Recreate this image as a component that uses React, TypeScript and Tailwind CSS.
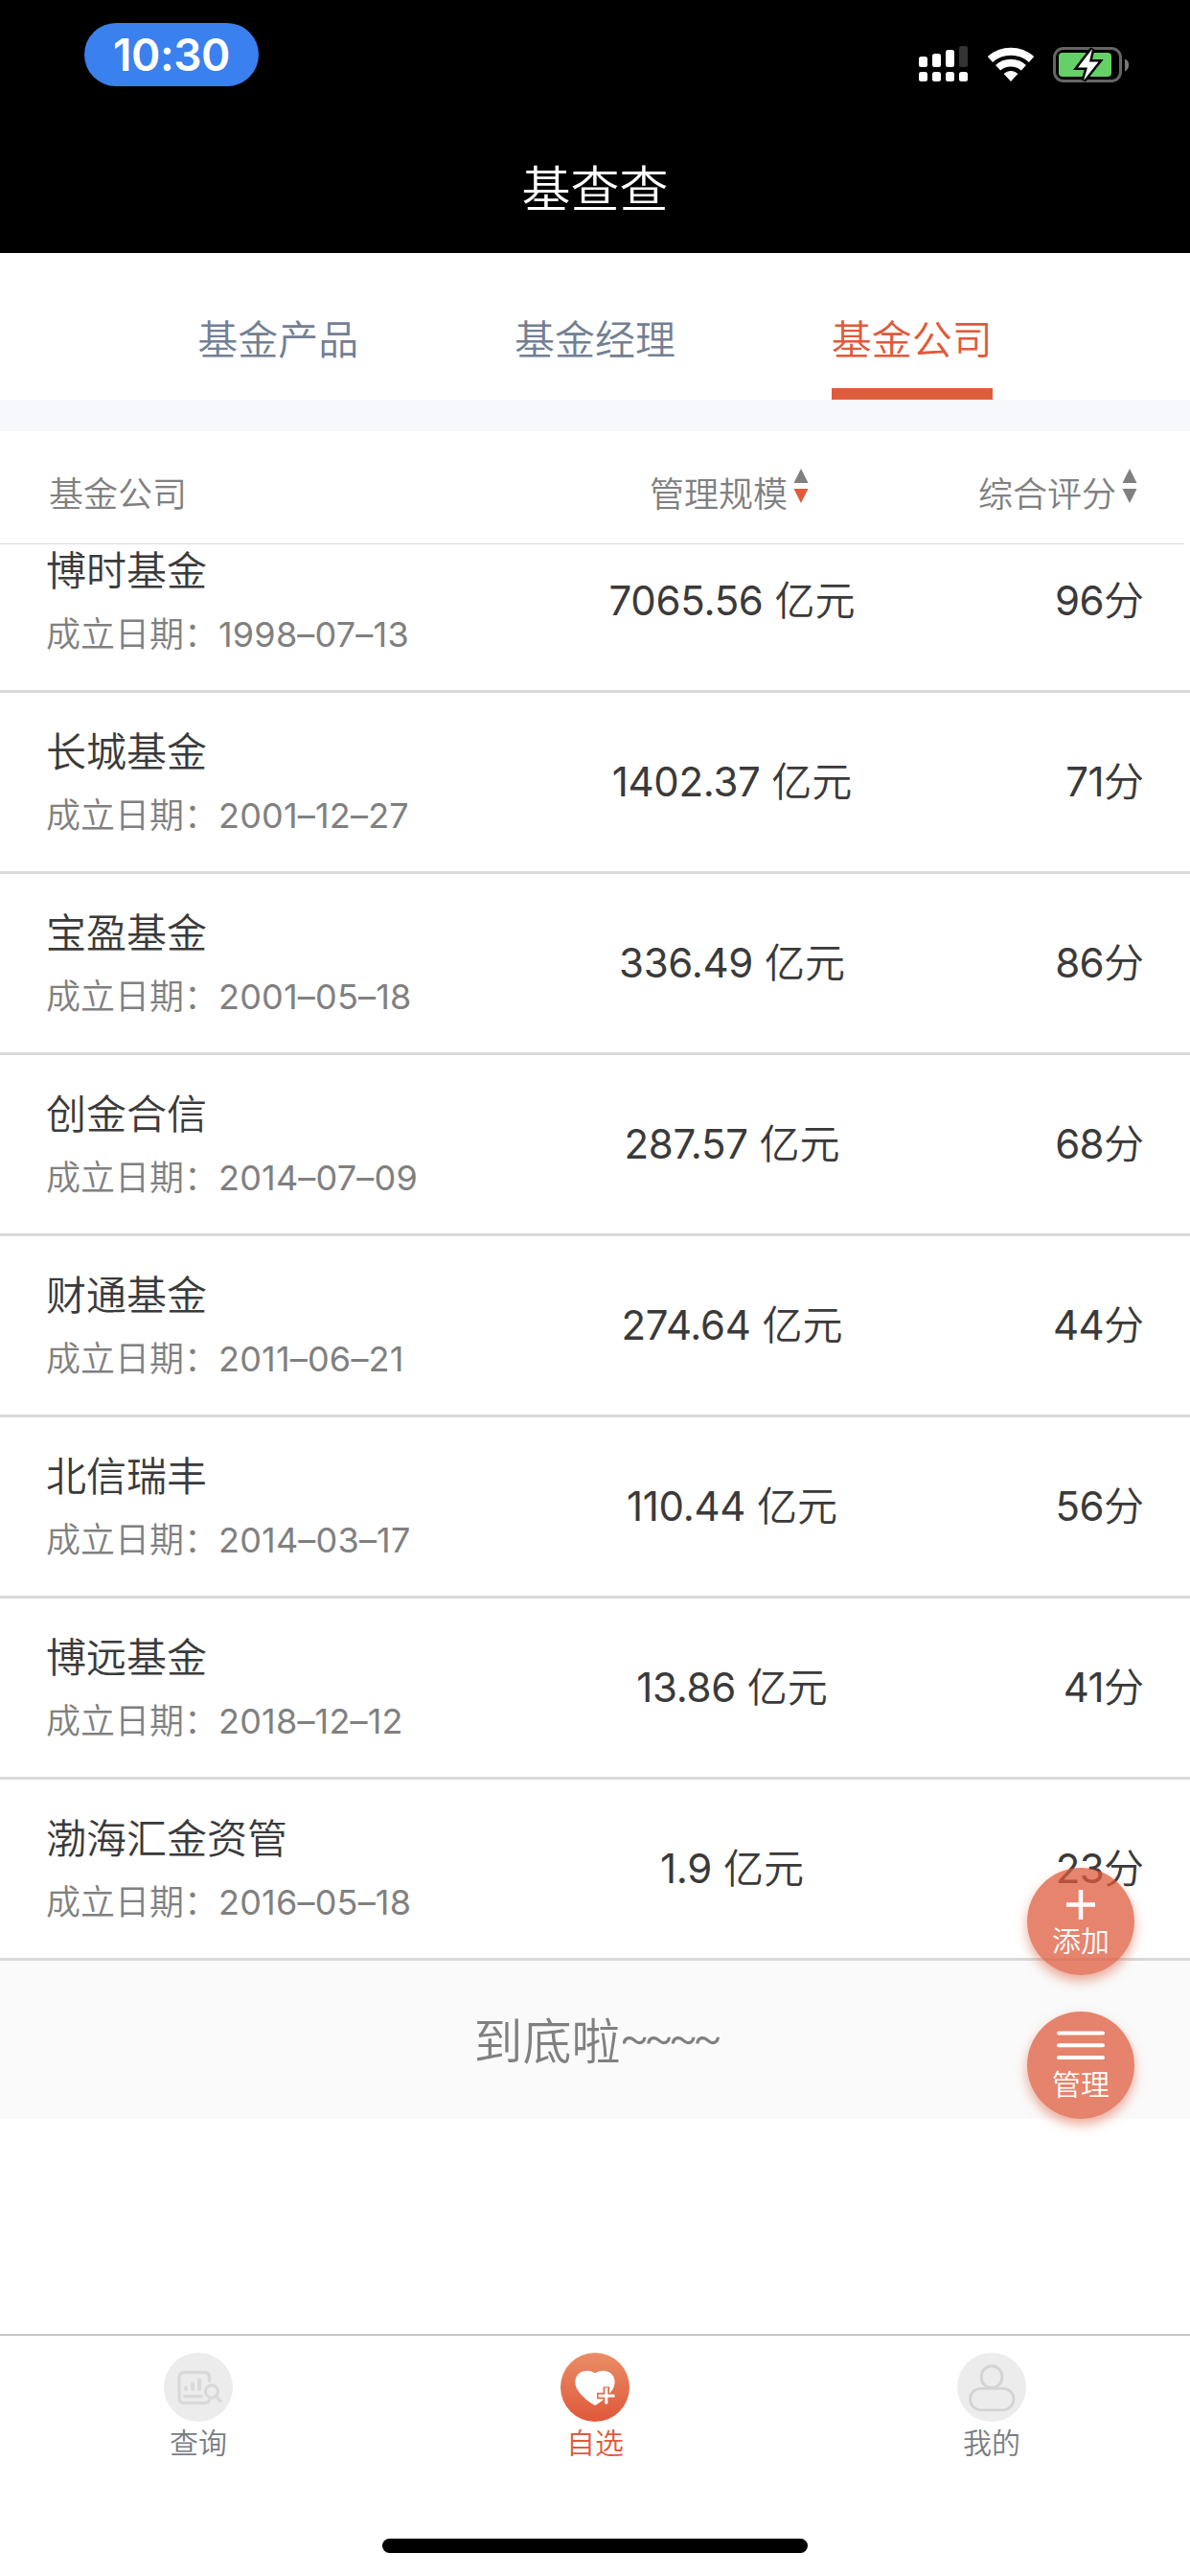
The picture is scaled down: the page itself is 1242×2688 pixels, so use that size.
import type { ReactNode } from "react";

type Company = { name: string; founded: string; scale: string; score: string };

const companies: Company[] = [
  { name: "博时基金", founded: "1998–07–13", scale: "7065.56", score: "96" },
  { name: "长城基金", founded: "2001–12–27", scale: "1402.37", score: "71" },
  { name: "宝盈基金", founded: "2001–05–18", scale: "336.49", score: "86" },
  { name: "创金合信", founded: "2014–07–09", scale: "287.57", score: "68" },
  { name: "财通基金", founded: "2011–06–21", scale: "274.64", score: "44" },
  { name: "北信瑞丰", founded: "2014–03–17", scale: "110.44", score: "56" },
  { name: "博远基金", founded: "2018–12–12", scale: "13.86", score: "41" },
  { name: "渤海汇金资管", founded: "2016–05–18", scale: "1.9", score: "23" },
];

function SignalIcon() {
  return (
    <svg width="52" height="38" viewBox="0 0 52 38" fill="#fff">
      <rect x="0" y="11" width="9" height="11" rx="2.5" />
      <rect x="14" y="8" width="9" height="14" rx="2.5" />
      <rect x="28" y="4" width="9" height="18" rx="2.5" />
      <rect x="42" y="0" width="9" height="22" rx="2.5" fill="#333" />
      <rect x="0" y="27" width="9" height="10" rx="2.5" />
      <rect x="14" y="27" width="9" height="10" rx="2.5" />
      <rect x="28" y="27" width="9" height="10" rx="2.5" />
      <rect x="42" y="27" width="9" height="10" rx="2.5" />
    </svg>
  );
}

function WifiIcon() {
  return (
    <svg width="48" height="38" viewBox="0 0 48 38" fill="none" stroke="#fff">
      <path d="M2.4 14A32.5 32.5 0 0 1 45.6 14" strokeWidth="8" />
      <path d="M10.6 22.8A19.8 19.8 0 0 1 37.4 22.8" strokeWidth="7.6" />
      <path d="M24 36.5L17.2 29A10.5 10.5 0 0 1 30.8 29Z" fill="#fff" strokeWidth="1" strokeLinejoin="round" />
    </svg>
  );
}

function BatteryIcon() {
  return (
    <svg width="80" height="42" viewBox="0 0 80 42">
      <rect x="1.5" y="3.5" width="69" height="34" rx="9.5" fill="none" stroke="#666" strokeWidth="3" />
      <rect x="6" y="8" width="55" height="25" rx="4" fill="#66d068" />
      <path d="M75 14.5C80.500 16 80.500 25.500 75 27.500Z" fill="#7a7a7a" />
      <path
        d="M41 4L26 23.500H36L32 37L47.500 17.500H38Z"
        fill="#fff"
        stroke="#000"
        strokeWidth="5"
        paintOrder="stroke"
      />
    </svg>
  );
}

function StatusBar() {
  return (
    <div className="flex h-[129px] items-start justify-between pt-6 pr-[63px] pl-[88px]">
      <div className="flex h-[66px] w-[182px] items-center justify-center rounded-[33px] bg-[#3a80ef] text-[46px] leading-none font-semibold tracking-[-0.4px] text-white">
        10:30
      </div>
      <div className="flex items-start pt-[23px]">
        <div className="mt-px mr-5">
          <SignalIcon />
        </div>
        <div className="mt-px mr-5">
          <WifiIcon />
        </div>
        <BatteryIcon />
      </div>
    </div>
  );
}

function Tab({ label, active = false }: { label: string; active?: boolean }) {
  return (
    <div className="flex flex-1 justify-center">
      <div
        className={
          active
            ? "h-[153px] border-b-[12px] border-[#de5b3c] pt-[61px] text-[42px] leading-[60px] text-[#de5b3c]"
            : "h-[153px] pt-[61px] text-[42px] leading-[60px] text-[#728093]"
        }
      >
        {label}
      </div>
    </div>
  );
}

function SortArrows({ descending = false }: { descending?: boolean }) {
  return (
    <svg className="mt-[39px] ml-[6px]" width="16" height="36" viewBox="0 0 16 36">
      <path d="M8 0L15.500 15H0.500Z" fill="#808080" />
      <path d="M8 36L15.500 21H0.500Z" fill={descending ? "#de5b3c" : "#808080"} />
    </svg>
  );
}

function CompanyRow({ company }: { company: Company }) {
  return (
    <div className="flex h-[189px] shrink-0 items-center border-b-[3px] border-[#d9d9d9] px-12">
      <div className="w-[516px]">
        <div className="h-[69px] text-[42px] leading-[60px]">{company.name}</div>
        <div className="flex h-[54px] items-center text-[36px] leading-[54px] text-[#808080]">
          <span className="w-[180px] whitespace-nowrap">成立日期：</span>
          <span className="font-normal tracking-[0.2px]">{company.founded}</span>
        </div>
      </div>
      <div className="w-[400px] text-center text-[42px] leading-[60px] whitespace-nowrap">
        <span className="font-normal tracking-[-0.3px]">{company.scale}</span> 亿元
      </div>
      <div className="flex-1 text-right text-[42px] leading-[60px]">
        <span className="font-normal tracking-[-0.6px]">{company.score}</span>分
      </div>
    </div>
  );
}

function FloatingButton({ label, children }: { label: string; children: ReactNode }) {
  return (
    <div className="flex size-28 flex-col items-center rounded-full bg-[#de5b3c]/75 pt-5 text-[30px] leading-[36px] text-white shadow-[0_6px_12px_rgba(222,91,60,0.5)]">
      <div className="flex h-[38px] items-start">{children}</div>
      {label}
    </div>
  );
}

function QueryIcon() {
  return (
    <svg width="72" height="72" viewBox="0 0 72 72" fill="none" stroke="#d9d9d9" strokeWidth="3.300" strokeLinecap="round">
      <circle cx="36" cy="36" r="36" fill="#ececec" stroke="none" />
      <path d="M47.500 29.500V26Q47.500 20.500 42 20.500H21.500Q16 20.500 16 26V47Q16 52.500 21.500 52.500H42Q46 52.500 47.300 50" />
      <path d="M23 36.500V38M30 32.500V38M37 28.500V38" strokeWidth="4" />
      <path d="M21.500 45.500H39" />
      <circle cx="50" cy="40.500" r="6.500" />
      <path d="M54.500 45.500L59 50.500" />
    </svg>
  );
}

function FavouriteIcon() {
  return (
    <svg width="72" height="72" viewBox="0 0 72 72">
      <defs>
        <linearGradient id="favourite" x1="0" y1="0" x2="0" y2="1">
          <stop offset="0" stopColor="#ea8d66" />
          <stop offset="1" stopColor="#de583a" />
        </linearGradient>
      </defs>
      <circle cx="36" cy="36" r="36" fill="url(#favourite)" />
      <path
        d="M36 21.500C31 17.500 24.500 18 20 21C14.500 25 13.800 33 18 39C22 45.500 29 51 36 55C43 51 50 45.500 54 39C58 33 57.500 25 52 21C47.500 18 41 17.500 36 21.500Z"
        fill="#fff"
      />
      <path d="M38 45H57M47.800 35.500V53.500" stroke="#e06a48" strokeWidth="6.500" />
      <path d="M39.500 45H56.500M47.800 36.500V53.500" stroke="#fff" strokeWidth="3" />
    </svg>
  );
}

function ProfileIcon() {
  return (
    <svg width="72" height="72" viewBox="0 0 72 72" fill="none" stroke="#d3d3d3" strokeWidth="2.800">
      <circle cx="36" cy="36" r="36" fill="#ececec" stroke="none" />
      <rect x="25.300" y="14" width="21.500" height="22.500" rx="10.500" />
      <rect x="13.500" y="37.300" width="45.500" height="22.500" rx="11.250" />
    </svg>
  );
}

function NavItem({ label, active = false, children }: { label: string; active?: boolean; children: ReactNode }) {
  return (
    <div className="flex flex-1 flex-col items-center pt-[18px]">
      {children}
      <span
        className={
          active ? "mt-1 text-[30px] leading-[36px] text-[#de5b3c]" : "mt-1 text-[30px] leading-[36px] text-[#787d84]"
        }
      >
        {label}
      </span>
    </div>
  );
}

export default function App() {
  return (
    <div className="relative flex h-[2688px] w-[1242px] flex-col overflow-hidden bg-white font-[Inter,'Noto_Sans_CJK_SC',sans-serif] font-[350] text-[#3a3a3a]">
      <header className="h-[264px] shrink-0 bg-black">
        <StatusBar />
        <h1 className="h-[135px] text-center text-[51px] leading-[137px] text-white">基查查</h1>
      </header>

      <nav className="flex h-[153px] shrink-0 px-[125px]">
        <Tab label="基金产品" />
        <Tab label="基金经理" />
        <Tab label="基金公司" active />
      </nav>
      <div className="h-[33px] shrink-0 bg-[#f6f8fb]" />

      <div className="mr-[6px] flex h-[118px] shrink-0 border-b border-[#d9d9d9] pl-[51px] text-[36px] leading-[133px] text-[#808080]">
        <span className="w-[627px]">基金公司</span>
        <span className="flex w-[343px]">
          管理规模
          <SortArrows descending />
        </span>
        <span className="flex">
          综合评分
          <SortArrows />
        </span>
      </div>

      <main className="flex h-[1478px] shrink-0 flex-col justify-end overflow-hidden">
        {companies.map((company) => (
          <CompanyRow key={company.name} company={company} />
        ))}
      </main>
      <div className="flex h-[165px] shrink-0 justify-center bg-[#fafafa] text-[51px] leading-[170px] text-[#808080]">
        <span>到底啦</span>
        <span className="-mt-[5px] -ml-[2px] tracking-[-7.800px]">~~~~</span>
      </div>

      <footer className="mt-auto h-[252px] shrink-0 border-t border-[#999]">
        <div className="flex h-[212px]">
          <NavItem label="查询">
            <QueryIcon />
          </NavItem>
          <NavItem label="自选" active>
            <FavouriteIcon />
          </NavItem>
          <NavItem label="我的">
            <ProfileIcon />
          </NavItem>
        </div>
        <div className="mx-auto h-[15px] w-[444px] rounded-full bg-black" />
      </footer>

      <div className="absolute top-[1949px] right-[58px] flex flex-col gap-[38px]">
        <FloatingButton label="添加">
          <svg className="mt-[3px]" width="30" height="31" viewBox="0 0 30 31" stroke="#fff" strokeWidth="4.500">
            <path d="M0 15.500H30M15 0V31" />
          </svg>
        </FloatingButton>
        <FloatingButton label="管理">
          <svg width="50" height="30" viewBox="0 0 50 30" stroke="#fff" strokeWidth="4" strokeLinecap="round">
            <path d="M2 2.500H48M2 15.300H48M2 28H48" />
          </svg>
        </FloatingButton>
      </div>
    </div>
  );
}
